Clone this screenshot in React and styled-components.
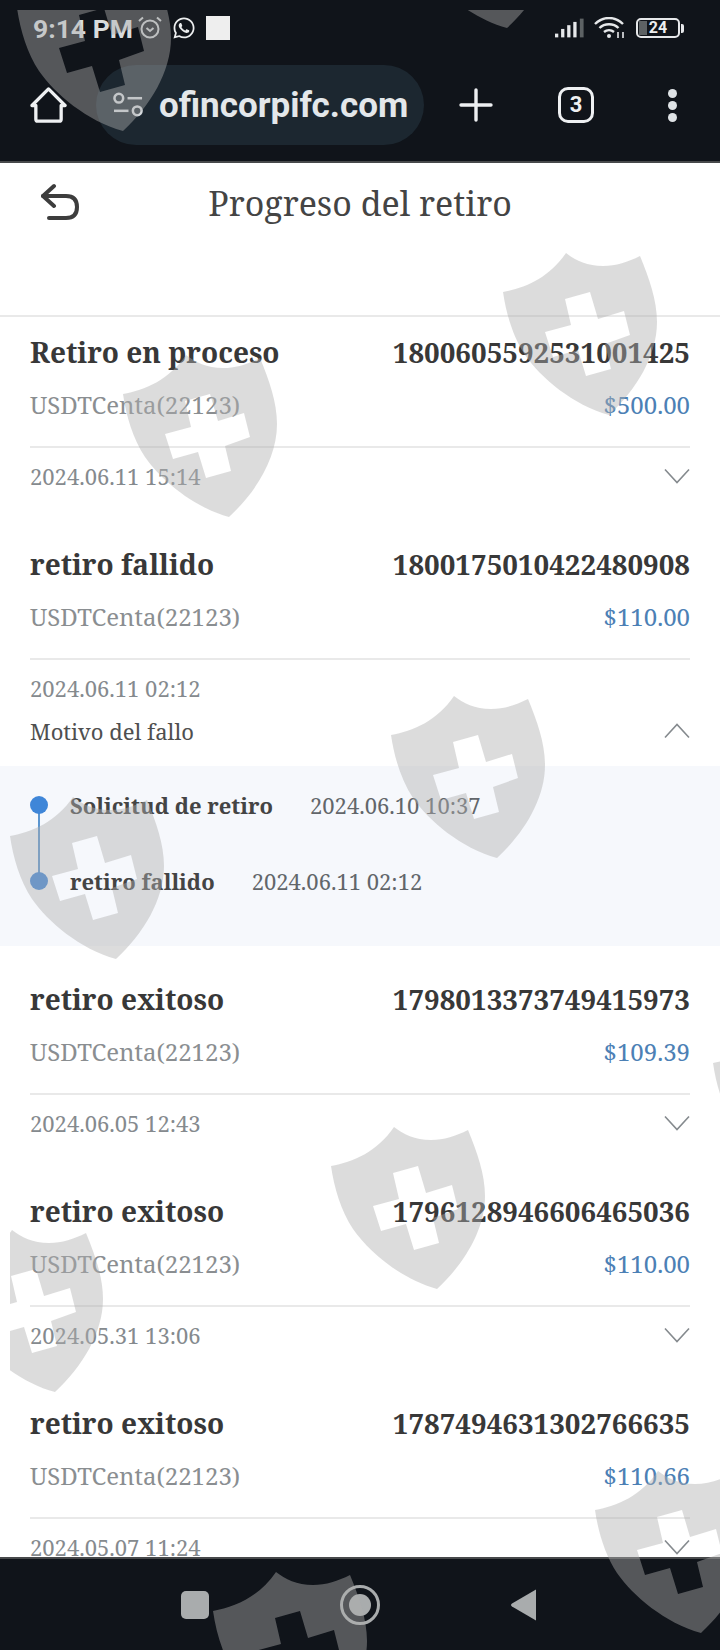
import React from 'react';
import styled, { createGlobalStyle } from 'styled-components';
import { FaWhatsapp } from 'react-icons/fa';

const GlobalStyle = createGlobalStyle`
  html, body {
    margin: 0;
    padding: 0;
    background: #fff;
  }
  * {
    box-sizing: border-box;
  }
`;

const serif = `"Noto Serif", "DejaVu Serif Condensed", "DejaVu Serif", serif`;

const orders = [
  { status: 'Retiro en proceso', id: '1800605592531001425', amount: '$500.00', date: '2024.06.11 15:14' },
  {
    status: 'retiro fallido',
    id: '1800175010422480908',
    amount: '$110.00',
    date: '2024.06.11 02:12',
    reason: 'Motivo del fallo',
    steps: [
      { label: 'Solicitud de retiro', date: '2024.06.10 10:37' },
      { label: 'retiro fallido', date: '2024.06.11 02:12' },
    ],
  },
  { status: 'retiro exitoso', id: '1798013373749415973', amount: '$109.39', date: '2024.06.05 12:43' },
  { status: 'retiro exitoso', id: '1796128946606465036', amount: '$110.00', date: '2024.05.31 13:06' },
  { status: 'retiro exitoso', id: '1787494631302766635', amount: '$110.66', date: '2024.05.07 11:24' },
];

// where the watermark shields land on the page
const shields = [
  [17, -31], [401, -134], [503, 253], [123, 355], [391, 696], [10, 797],
  [713, 1024], [331, 1127], [-51, 1230], [595, 1471], [213, 1572],
];

function App() {
  return (
    <Page>
      <GlobalStyle />
      <BrowserTop>
        <StatusBar>
          <Clock>9:14 PM</Clock>
          <AlarmIcon />
          <WhatsApp />
          <Blank />
          <StatusRight>
            <SignalIcon />
            <WifiIcon />
            <Battery><BatteryLevel />24</Battery>
            <BatteryCap />
          </StatusRight>
        </StatusBar>
        <Toolbar>
          <HomeIcon />
          <UrlPill>
            <SlidersIcon />
            <UrlText>ofincorpifc.com</UrlText>
          </UrlPill>
          <PlusIcon />
          <TabCount>3</TabCount>
          <MenuDots><i /><i /><i /></MenuDots>
        </Toolbar>
      </BrowserTop>

      <Content>
        <Header>
          <BackIcon />
          <Title>Progreso del retiro</Title>
        </Header>
        {orders.map((order) => (
          <Order key={order.id}>
            <OrderBody $open={!!order.steps}>
              <TopRow>
                <Status>{order.status}</Status>
                <OrderId>{order.id}</OrderId>
              </TopRow>
              <SubRow>
                <Method>USDTCenta(22123)</Method>
                <Amount>{order.amount}</Amount>
              </SubRow>
              <Divider />
              {order.reason ? (
                <>
                  <DateRow><DateText>{order.date}</DateText></DateRow>
                  <ReasonRow>
                    <Reason>{order.reason}</Reason>
                    <Chevron $up />
                  </ReasonRow>
                </>
              ) : (
                <DateRow>
                  <DateText>{order.date}</DateText>
                  <Chevron />
                </DateRow>
              )}
            </OrderBody>
            {order.steps && (
              <Timeline>
                {order.steps.map((step, i) => (
                  <Step key={step.label} $last={i === order.steps.length - 1}>
                    <Dot />
                    <StepLabel>{step.label}</StepLabel>
                    <StepDate>{step.date}</StepDate>
                  </Step>
                ))}
              </Timeline>
            )}
          </Order>
        ))}
      </Content>

      <NavBar>
        <NavSquare />
        <NavHome viewBox="0 0 42 42">
          <circle cx="21" cy="21" r="18.5" fill="none" stroke="#a9acad" strokeWidth="3" />
          <circle cx="21" cy="21" r="11" fill="#a9acad" />
        </NavHome>
        <NavBack viewBox="0 0 28 34">
          <path d="M27 1.5 V32.5 L3 18.5 Q1 17 3 15.5 Z" fill="#a9acad" />
        </NavBack>
      </NavBar>

      <Watermarks>
        {shields.map(([x, y]) => (
          <Shield key={`${x}-${y}`} $x={x} $y={y} viewBox="0 0 156 164">
            <path
              fillRule="evenodd"
              d="M63 0 C72 7 84 13 100 13 C113 13 125 9 137 3 C146 25 154 47 154 69 C154 103 133 137 106 162 C70 152 38 125 22 102 C10 84 3 60 0 39 C22 35 46 25 63 0 Z M62 46 L87 39 L95 66 L121 58 L127 82 L102 91 L108 116 L83 123 L75 97 L50 104 L42 79 L68 72 Z"
            />
          </Shield>
        ))}
      </Watermarks>
    </Page>
  );
}

function AlarmIcon() {
  return (
    <StatusIcon width="26" height="26" viewBox="0 0 26 26" fill="none" stroke="#c9cccd" strokeWidth="2">
      <circle cx="13" cy="14" r="8.5" />
      <path d="M9.5 13 L13 16 L16.5 13" />
      <path d="M2 6 L6 2.5 M24 6 L20 2.5" />
    </StatusIcon>
  );
}

function SignalIcon() {
  return (
    <svg width="30" height="20" viewBox="0 0 32 20">
      <rect x="0" y="16" width="3.5" height="4" fill="#e6e8ea" />
      <rect x="6.5" y="11" width="3.5" height="9" fill="#e6e8ea" />
      <rect x="13" y="7" width="3.5" height="13" fill="#e6e8ea" />
      <rect x="19.5" y="3.5" width="3.5" height="16.5" fill="#e6e8ea" />
      <rect x="26.5" y="0" width="4" height="20" fill="#5d6264" />
    </svg>
  );
}

function WifiIcon() {
  return (
    <svg width="32" height="22" viewBox="0 0 32 22" fill="none" stroke="#e6e8ea" strokeWidth="2.4">
      <path d="M1 7 C9 -1 21 -1 29 7" />
      <path d="M5.5 11 C10.5 6 19.5 6 24.5 11" />
      <path d="M10 15 C13 12.5 17 12.5 20 15" />
      <circle cx="15" cy="19" r="2" fill="#e6e8ea" stroke="none" />
      <path d="M24 15 V21 M29 15 V21" strokeWidth="1.6" />
    </svg>
  );
}

function HomeIcon() {
  return (
    <HomeSvg viewBox="0 0 38 38" fill="none" stroke="#eef0f2" strokeWidth="3.4" strokeLinejoin="round">
      <path d="M6 19 H2 L19 2 L36 19 H32 V33 Q32 35 30 35 H8 Q6 35 6 33 Z" />
    </HomeSvg>
  );
}

function SlidersIcon() {
  return (
    <SlidersSvg viewBox="0 0 32 26" fill="none" stroke="#d5dade" strokeWidth="2.6">
      <circle cx="6" cy="6" r="4.5" />
      <path d="M15 6 H30" />
      <path d="M1 19 H16" />
      <circle cx="25" cy="19" r="4.5" />
    </SlidersSvg>
  );
}

function PlusIcon() {
  return (
    <PlusSvg viewBox="0 0 34 34" stroke="#eef0f2" strokeWidth="3.4" strokeLinecap="round">
      <path d="M17 2 V32 M2 17 H32" />
    </PlusSvg>
  );
}

function BackIcon() {
  return (
    <BackSvg viewBox="0 0 38 38" fill="none" stroke="#3d3d3d" strokeWidth="4" strokeLinecap="round" strokeLinejoin="round">
      <path d="M13 3 L2 13 L13 23" />
      <path d="M2 13 H25 Q36 13 36 24 Q36 35 25 35 H8" />
    </BackSvg>
  );
}

function Chevron({ $up }) {
  return (
    <ChevronSvg $up={$up} viewBox="0 0 26 16" fill="none" stroke="#858a8e" strokeWidth="1.6">
      <path d="M1 1.5 L13 14.5 L25 1.5" />
    </ChevronSvg>
  );
}

export default App;

const Page = styled.div`
  position: relative;
  width: 720px;
  height: 1650px;
  overflow: hidden;
  display: flex;
  flex-direction: column;
  background: #fff;
  font-family: ${serif};
`;

const BrowserTop = styled.div`
  flex: none;
  height: 163px;
  background: #10141a;
  border-bottom: 2px solid #47494b;
`;

const StatusBar = styled.div`
  height: 56px;
  padding: 0 36px 0 33px;
  display: flex;
  align-items: center;
  color: #eceeef;
  font-family: Roboto, sans-serif;
`;

const Clock = styled.span`
  font-size: 26.5px;
  font-weight: 700;
  color: #d9dcdd;
`;

const StatusIcon = styled.svg`
  margin-left: 4px;
`;

const WhatsApp = styled(FaWhatsapp)`
  margin-left: 9px;
  font-size: 24px;
  color: #eceeef;
`;

const Blank = styled.div`
  width: 24px;
  height: 24px;
  margin-left: 10px;
  background: #eeeeee;
`;

const StatusRight = styled.div`
  margin-left: auto;
  display: flex;
  align-items: center;
  gap: 9px;
`;

const Battery = styled.div`
  position: relative;
  width: 44px;
  height: 20px;
  border: 2px solid #e6e8ea;
  border-radius: 5px;
  font-size: 16px;
  font-weight: 700;
  line-height: 16px;
  text-align: center;
  color: #eceeef;
  margin-left: 1px;
`;

const BatteryLevel = styled.div`
  position: absolute;
  left: 1px;
  top: 1px;
  bottom: 1px;
  width: 8px;
  background: #5d6264;
`;

const BatteryCap = styled.div`
  width: 3px;
  height: 9px;
  margin-left: -8px;
  background: #e6e8ea;
  border-radius: 0 2px 2px 0;
`;

const Toolbar = styled.div`
  height: 80px;
  margin-top: 9px;
  padding-left: 30px;
  display: flex;
  align-items: center;
`;

const HomeSvg = styled.svg`
  width: 37px;
  height: 37px;
  flex: none;
`;

const UrlPill = styled.div`
  width: 328px;
  height: 80px;
  margin-left: 29px;
  padding-left: 17px;
  border-radius: 40px;
  background: #1c2730;
  display: flex;
  align-items: center;
`;

const SlidersSvg = styled.svg`
  width: 31px;
  height: 26px;
  flex: none;
`;

const UrlText = styled.span`
  margin-left: 15px;
  font-family: Roboto, sans-serif;
  font-size: 35px;
  font-weight: 700;
  color: #e3e7ea;
`;

const PlusSvg = styled.svg`
  width: 34px;
  height: 34px;
  margin-left: 35px;
  flex: none;
`;

const TabCount = styled.div`
  width: 36px;
  height: 36px;
  margin-left: 65px;
  border: 3.5px solid #eef0f2;
  border-radius: 10px;
  text-align: center;
  font-family: Roboto, sans-serif;
  font-size: 22px;
  font-weight: 700;
  line-height: 29px;
  color: #eef0f2;
`;

const MenuDots = styled.div`
  margin-left: 74px;
  display: flex;
  flex-direction: column;
  gap: 3px;

  i {
    display: block;
    width: 9px;
    height: 9px;
    border-radius: 50%;
    background: #dfe3e6;
  }
`;

const Content = styled.div`
  flex: 1;
  min-height: 0;
  overflow: hidden;
`;

const Header = styled.div`
  position: relative;
  height: 154px;
  padding-top: 17px;
  border-bottom: 2px solid #e9e9e9;
  text-align: center;
`;

const BackSvg = styled.svg`
  position: absolute;
  left: 41px;
  top: 20px;
  width: 38px;
  height: 38px;
`;

const Title = styled.div`
  font-size: 34px;
  line-height: 46px;
  color: #444;
`;

const Order = styled.section`
  display: flex;
  flex-direction: column;
`;

const OrderBody = styled.div`
  padding: 14px 30px ${(p) => (p.$open ? '21px' : '39px')};
`;

const TopRow = styled.div`
  height: 42px;
  display: flex;
  align-items: center;
  justify-content: space-between;
`;

const Status = styled.span`
  font-size: 28px;
  font-weight: 700;
  color: #383838;
`;

const OrderId = styled(Status)`
  font-size: 27.7px;
`;

const SubRow = styled.div`
  height: 44px;
  margin-top: 9px;
  display: flex;
  align-items: center;
  justify-content: space-between;
  font-size: 24px;
`;

const Method = styled.span`
  color: #8a8e91;
`;

const Amount = styled.span`
  color: #4c80b5;
`;

const Divider = styled.div`
  height: 2px;
  margin: 20px 0 14px;
  background: #e9e9e9;
`;

const DateRow = styled.div`
  height: 28px;
  display: flex;
  align-items: center;
  justify-content: space-between;
`;

const DateText = styled.span`
  font-size: 22px;
  color: #858a8e;
`;

const ReasonRow = styled(DateRow)`
  margin-top: 15px;
`;

const Reason = styled.span`
  font-size: 22px;
  color: #4f4f4f;
`;

const ChevronSvg = styled.svg`
  width: 26px;
  height: 16px;
  transform: ${(p) => (p.$up ? 'rotate(180deg)' : 'none')};
`;

const Timeline = styled.div`
  height: 180px;
  margin-bottom: 18px;
  padding: 21px 30px 0;
  background: #f6f8fc;
`;

const Step = styled.div`
  position: relative;
  height: ${(p) => (p.$last ? '36px' : '76px')};
  line-height: 36px;
  display: flex;
  align-items: flex-start;
  gap: 37px;

  &::before {
    content: '';
    display: ${(p) => (p.$last ? 'none' : 'block')};
    position: absolute;
    left: 8px;
    top: 18px;
    width: 2px;
    height: 76px;
    background: #5b96d0;
  }
`;

const Dot = styled.span`
  position: absolute;
  left: 0;
  top: 9px;
  width: 18px;
  height: 18px;
  border-radius: 50%;
  background: #3f86d8;
`;

const StepLabel = styled.span`
  margin-left: 40px;
  font-size: 22px;
  font-weight: 700;
  color: #444;
`;

const StepDate = styled.span`
  font-size: 22px;
  color: #62666a;
`;

const NavBar = styled.div`
  flex: none;
  height: 93px;
  background: #10141a;
  border-top: 2px solid #47494b;
  position: relative;
  display: flex;
  align-items: center;
`;

const NavSquare = styled.div`
  width: 28px;
  height: 28px;
  margin-left: 181px;
  border-radius: 5px;
  background: #a9acad;
`;

const NavHome = styled.svg`
  width: 42px;
  height: 42px;
  margin-left: 130px;
`;

const NavBack = styled.svg`
  width: 28px;
  height: 34px;
  margin-left: 128px;
`;

const Watermarks = styled.div`
  position: absolute;
  left: 10px;
  top: 10px;
  right: 0;
  bottom: 0;
  overflow: hidden;
  pointer-events: none;
`;

const Shield = styled.svg`
  position: absolute;
  left: ${(p) => p.$x - 10}px;
  top: ${(p) => p.$y - 10}px;
  width: 156px;
  height: 164px;
  fill: rgba(175, 175, 175, 0.435);
`;
